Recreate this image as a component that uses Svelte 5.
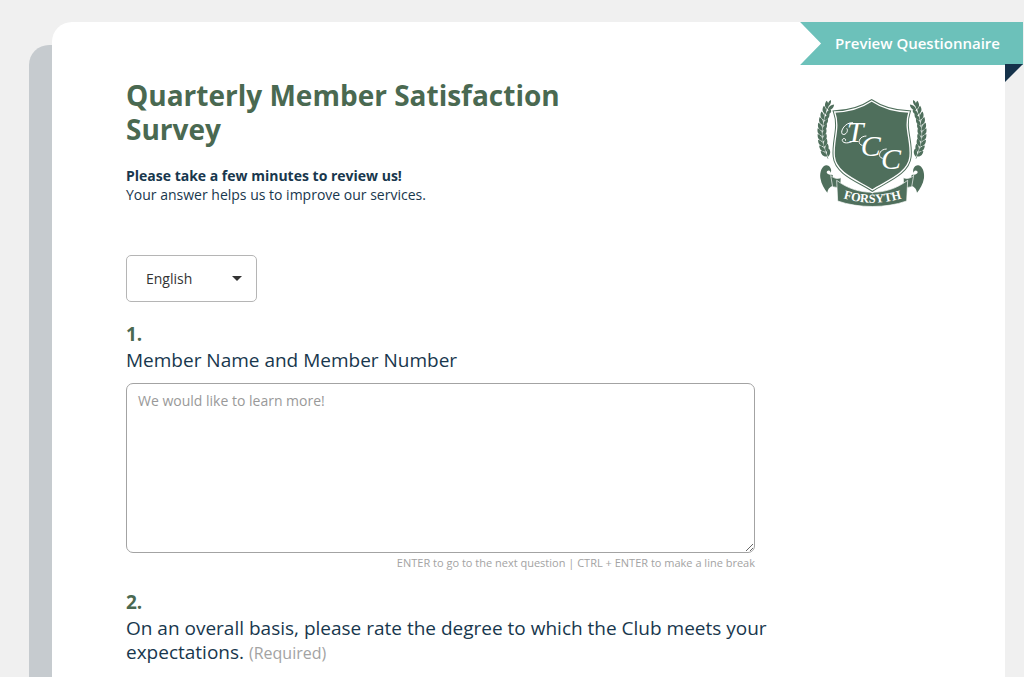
<script>
  const languages = ["English", "Español", "Français"];

  let language = $state("English");
  let member = $state("");

  // one side of the wreath, from the tip down to the ribbon
  const stem = [
    [52, 46],
    [45, 61],
    [39, 77],
    [35, 93],
    [32, 109],
    [31, 125],
    [32, 141],
    [34, 157],
    [38, 173],
    [43, 188],
  ];
</script>

{#snippet branch()}
  <g transform="translate(4 0)">
    <path d="M57 32C38 68 14 130 50 205" fill="none" stroke="#4f6f5c" stroke-width="2" />
    <path d="M59 29c-8 3-10 10-9 19c7-4 10-10 9-19z" />
    {#each stem as [x, y], i}
      <g transform="translate({x} {y}) rotate({20 - i * 5})">
        <path d="M0 11C-12 8-14-2-11-12C-3-8 2 0 0 11z" />
        <path d="M2 13C0 2 6-5 14-9C17 1 12 10 2 13z" />
      </g>
    {/each}
  </g>
{/snippet}

{#snippet ribbonEnd()}
  <path d="M48 225C35 228 29 246 31 263C34 282 43 296 52 307C54 294 62 288 74 285L68 254C58 254 47 251 51 243C57 237 64 244 61 249C68 240 60 224 48 225z" />
  <path d="M62 255C71 265 84 266 93 262L92 298C82 291 74 289 68 290z" stroke="white" stroke-width="2" />
{/snippet}

<main class="page">
  <div class="sheet">
    <a class="preview" href="#preview">Preview Questionnaire</a>

    <header>
      <div class="intro">
        <h1>Quarterly Member Satisfaction Survey</h1>
        <p><strong>Please take a few minutes to review us!</strong></p>
        <p>Your answer helps us to improve our services.</p>
      </div>

      <svg class="crest" viewBox="18 20 336 330" role="img" aria-label="Forsyth crest">
        <g fill="#4f6f5c">
          {@render branch()}
          <g transform="translate(372 0) scale(-1 1)">{@render branch()}</g>
          {@render ribbonEnd()}
          <g transform="translate(373 0) scale(-1 1)">{@render ribbonEnd()}</g>
          <path d="M80 270C143 318 230 318 293 270L290 332C228 354 146 354 83 332z" stroke="white" stroke-width="2" />
        </g>
        <g>
          <path d="M185 32C151 55 113 64 74 65C91 113 68 150 73 199C78 250 147 272 187 299C228 272 295 250 300 199C305 150 281 113 297 65C258 64 219 55 185 32z" fill="none" stroke="white" stroke-width="17" />
          <path d="M185 32C151 55 113 64 74 65C91 113 68 150 73 199C78 250 147 272 187 299C228 272 295 250 300 199C305 150 281 113 297 65C258 64 219 55 185 32z" fill="none" stroke="#4f6f5c" stroke-width="10" />
          <path d="M185 32C151 55 113 64 74 65C91 113 68 150 73 199C78 250 147 272 187 299C228 272 295 250 300 199C305 150 281 113 297 65C258 64 219 55 185 32z" fill="#4f6f5c" stroke="white" stroke-width="4" />
        </g>
        <text class="monogram"><tspan x="110" y="154">T</tspan><tspan x="152" y="196">C</tspan><tspan x="213" y="235">C</tspan></text>
        <g fill="none" stroke="white" stroke-width="3" stroke-linecap="round">
          <path d="M128 97C104 95 88 126 98 132C108 135 116 121 111 115" />
          <path d="M130 152C112 162 95 158 97 148C100 142 109 145 107 150" />
          <path d="M168 137C144 138 142 163 156 165M229 176C205 177 203 202 217 204" />
        </g>
        <path id="motto" d="M98 323Q187 351 277 323" fill="none" />
        <text class="motto">
          <textPath href="#motto" startOffset="50%" text-anchor="middle">FORSYTH</textPath>
        </text>
      </svg>
    </header>

    <form>
      <select aria-label="Language" bind:value={language}>
        {#each languages as name}
          <option>{name}</option>
        {/each}
      </select>

      <section>
        <span class="number">1.</span>
        <label class="question" for="member">Member Name and Member Number</label>
        <textarea id="member" placeholder="We would like to learn more!" bind:value={member}></textarea>
        <p class="hint">ENTER to go to the next question | CTRL + ENTER to make a line break</p>
      </section>

      <section>
        <span class="number">2.</span>
        <h2 class="question">
          On an overall basis, please rate the degree to which the Club meets your expectations.
          <span class="required">(Required)</span>
        </h2>
      </section>
    </form>
  </div>
</main>

<style>
  :global(body) {
    margin: 0;
    background: #f0f0f0;
  }

  .page {
    box-sizing: border-box;
    position: relative;
    display: flex;
    min-height: 100vh;
    padding: 22px 19px 0 52px;
    font-family: "Open Sans", "Noto Sans", sans-serif;
    color: #18374d;
  }

  /* second sheet behind the card */
  .page::before {
    content: "";
    position: absolute;
    top: 45px;
    bottom: 0;
    left: 29px;
    width: 60px;
    border-radius: 20px 0 0 0;
    background: #c6cbcf;
  }

  .sheet {
    position: relative;
    flex: 1;
    padding: 56px 77px 0 74px;
    border-radius: 20px 0 0 0;
    background: white;
  }

  .preview {
    position: absolute;
    top: 0;
    right: -18px;
    padding: 0 23px 0 35px;
    background: #6cc1ba;
    clip-path: polygon(0 0, 100% 0, 100% 100%, 0 100%, 21px 50%);
    font-size: 15px;
    font-weight: 600;
    line-height: 43px;
    color: white;
    text-decoration: none;
  }

  .sheet::after {
    content: "";
    position: absolute;
    top: 42px;
    right: -18px;
    width: 18px;
    height: 18px;
    background: #15324a;
    clip-path: polygon(0 0, 100% 0, 0 100%);
  }

  header {
    display: flex;
    justify-content: space-between;
    align-items: flex-start;
  }

  .intro {
    max-width: 480px;
  }

  h1 {
    margin: 0 0 20px;
    font-size: 28px;
    font-weight: 700;
    line-height: 34px;
    color: #4a6951;
  }

  p {
    margin: 0;
    font-size: 14px;
    line-height: 19px;
  }

  .crest {
    width: 112px;
    height: 110px;
    margin-top: 19px;
  }

  .monogram {
    fill: white;
    font: italic 90px "Liberation Serif", serif;
  }

  .motto {
    fill: white;
    font: bold 37px "Liberation Serif", serif;
  }

  form {
    max-width: 629px;
    margin-top: 48px;
  }

  select {
    appearance: none;
    display: block;
    width: 131px;
    height: 47px;
    padding: 0 19px;
    border: 1px solid #b5b5b5;
    border-radius: 5px;
    background: white
      url("data:image/svg+xml,%3Csvg xmlns='http://www.w3.org/2000/svg' viewBox='0 0 10 5'%3E%3Cpath d='M0 0h10L5 5z' fill='%23333'/%3E%3C/svg%3E")
      no-repeat right 14px center / 10px 5px;
    font: inherit;
    font-size: 14px;
    color: #333;
  }

  section {
    display: flex;
    flex-direction: column;
    margin-top: 18px;
  }

  .number {
    font-size: 19px;
    font-weight: 700;
    line-height: 28px;
    color: #4a6951;
  }

  .question {
    margin: 0 -12px 0 0;
    font-size: 19px;
    font-weight: 400;
    line-height: 24px;
  }

  .required {
    font-size: 16px;
    color: #a3a3a3;
  }

  textarea {
    box-sizing: border-box;
    width: 100%;
    height: 170px;
    margin-top: 11px;
    padding: 7px 11px;
    border: 1px solid #a3a3a3;
    border-radius: 7px;
    font: inherit;
    font-size: 14px;
    line-height: 19px;
    color: inherit;
  }

  textarea::placeholder {
    color: #999;
  }

  .hint {
    margin-top: 3px;
    font-size: 11px;
    line-height: 14px;
    text-align: right;
    color: #a3a3a3;
  }
</style>
